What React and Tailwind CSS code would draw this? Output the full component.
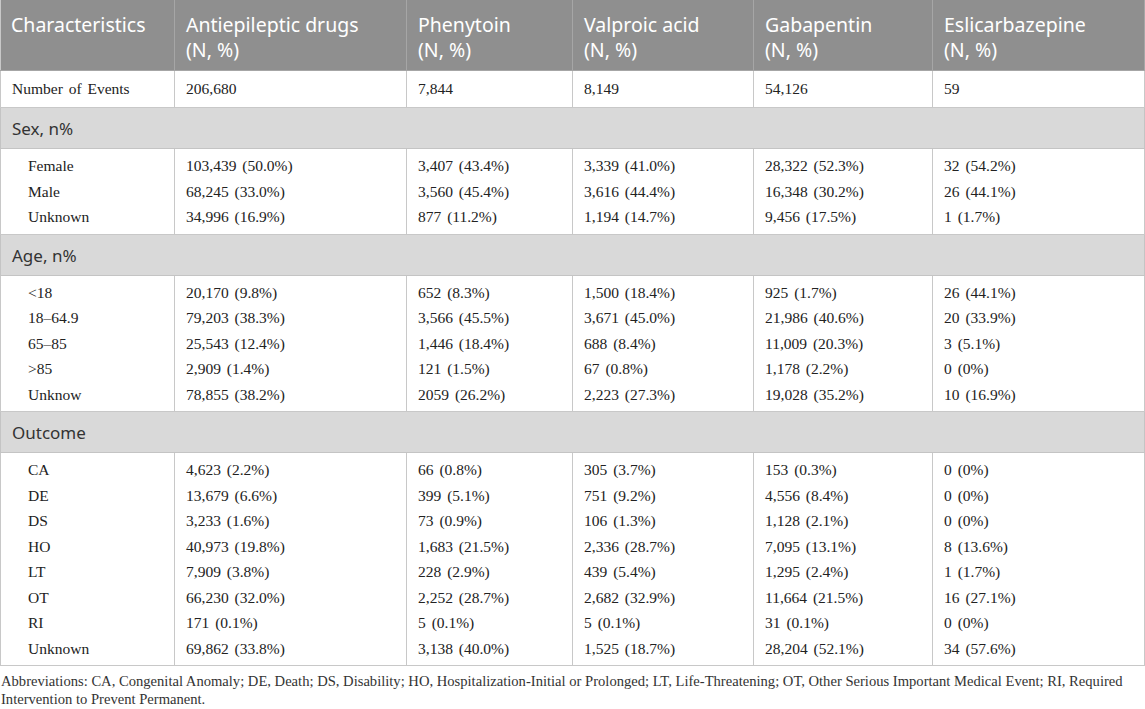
import React from "react";

const cols = ["Antiepileptic drugs", "Phenytoin", "Valproic acid", "Gabapentin", "Eslicarbazepine"];

const groups = [
  {
    title: "Sex, n%",
    rows: [
      ["Female", "103,439 (50.0%)", "3,407 (43.4%)", "3,339 (41.0%)", "28,322 (52.3%)", "32 (54.2%)"],
      ["Male", "68,245 (33.0%)", "3,560 (45.4%)", "3,616 (44.4%)", "16,348 (30.2%)", "26 (44.1%)"],
      ["Unknown", "34,996 (16.9%)", "877 (11.2%)", "1,194 (14.7%)", "9,456 (17.5%)", "1 (1.7%)"],
    ],
  },
  {
    title: "Age, n%",
    rows: [
      ["<18", "20,170 (9.8%)", "652 (8.3%)", "1,500 (18.4%)", "925 (1.7%)", "26 (44.1%)"],
      ["18–64.9", "79,203 (38.3%)", "3,566 (45.5%)", "3,671 (45.0%)", "21,986 (40.6%)", "20 (33.9%)"],
      ["65–85", "25,543 (12.4%)", "1,446 (18.4%)", "688 (8.4%)", "11,009 (20.3%)", "3 (5.1%)"],
      [">85", "2,909 (1.4%)", "121 (1.5%)", "67 (0.8%)", "1,178 (2.2%)", "0 (0%)"],
      ["Unknow", "78,855 (38.2%)", "2059 (26.2%)", "2,223 (27.3%)", "19,028 (35.2%)", "10 (16.9%)"],
    ],
  },
  {
    title: "Outcome",
    rows: [
      ["CA", "4,623 (2.2%)", "66 (0.8%)", "305 (3.7%)", "153 (0.3%)", "0 (0%)"],
      ["DE", "13,679 (6.6%)", "399 (5.1%)", "751 (9.2%)", "4,556 (8.4%)", "0 (0%)"],
      ["DS", "3,233 (1.6%)", "73 (0.9%)", "106 (1.3%)", "1,128 (2.1%)", "0 (0%)"],
      ["HO", "40,973 (19.8%)", "1,683 (21.5%)", "2,336 (28.7%)", "7,095 (13.1%)", "8 (13.6%)"],
      ["LT", "7,909 (3.8%)", "228 (2.9%)", "439 (5.4%)", "1,295 (2.4%)", "1 (1.7%)"],
      ["OT", "66,230 (32.0%)", "2,252 (28.7%)", "2,682 (32.9%)", "11,664 (21.5%)", "16 (27.1%)"],
      ["RI", "171 (0.1%)", "5 (0.1%)", "5 (0.1%)", "31 (0.1%)", "0 (0%)"],
      ["Unknown", "69,862 (33.8%)", "3,138 (40.0%)", "1,525 (18.7%)", "28,204 (52.1%)", "34 (57.6%)"],
    ],
  },
];

const sans = "font-['Noto_Sans','Open_Sans',sans-serif]";
const serif = "font-['Liberation_Serif','Times_New_Roman',serif]";

export default function App() {
  return (
    <div className="w-[1145px] h-[709px] bg-white overflow-hidden">
      <table className="w-[1144px] border-collapse table-fixed">
        <colgroup>
          <col className="w-[174px]" />
          <col className="w-[232px]" />
          <col className="w-[166px]" />
          <col className="w-[181px]" />
          <col className="w-[179px]" />
          <col className="w-[212px]" />
        </colgroup>
        <thead>
          <tr className="bg-[#8f8f8f]">
            <th className={`${sans} text-left align-top font-normal text-white text-[19.5px] leading-[25px] pt-[12px] pb-[8px] px-[10px] border border-[#a6a6a6] border-t-0 border-l-[#c8c8c8]`}>
              Characteristics
            </th>
            {cols.map((c) => (
              <th
                key={c}
                className={`${sans} text-left align-top font-normal text-white text-[19.5px] leading-[25px] pt-[12px] pb-[8px] px-[11px] border border-[#a6a6a6] border-t-0`}
              >
                <div className="whitespace-nowrap">{c}</div>
                <div>(N, %)</div>
              </th>
            ))}
          </tr>
        </thead>
        <tbody className={`${serif} text-[15.5px] text-[#222] [word-spacing:2px]`}>
          <tr>
            {["Number of Events", "206,680", "7,844", "8,149", "54,126", "59"].map((v, i) => (
              <td key={i} className="px-[11px] py-[6px] leading-[24px] border border-[#c8c8c8] whitespace-nowrap">
                {v}
              </td>
            ))}
          </tr>
          {groups.map((g) => (
            <React.Fragment key={g.title}>
              <tr className="bg-[#d9d9d9]">
                <td
                  colSpan={6}
                  className={`${sans} text-[17px] text-[#333] leading-[24px] px-[11px] pt-[9px] pb-[7px] border border-[#c4c4c4] [word-spacing:0px]`}
                >
                  {g.title}
                </td>
              </tr>
              <tr>
                {[0, 1, 2, 3, 4, 5].map((ci) => (
                  <td
                    key={ci}
                    className={`align-top py-[4px] border border-[#c8c8c8] ${ci === 0 ? "pl-[27px] pr-[8px]" : "px-[11px]"}`}
                  >
                    {g.rows.map((r, ri) => (
                      <div key={ri} className="leading-[25.5px] whitespace-nowrap">
                        {r[ci]}
                      </div>
                    ))}
                  </td>
                ))}
              </tr>
            </React.Fragment>
          ))}
        </tbody>
      </table>
      <div className={`${serif} text-[14.6px] leading-[18px] text-[#333] mt-[6px] pl-[1px] whitespace-nowrap`}>
        Abbreviations: CA, Congenital Anomaly; DE, Death; DS, Disability; HO, Hospitalization-Initial or Prolonged; LT, Life-Threatening; OT, Other Serious Important Medical Event; RI, Required
        <br />
        Intervention to Prevent Permanent.
      </div>
    </div>
  );
}
